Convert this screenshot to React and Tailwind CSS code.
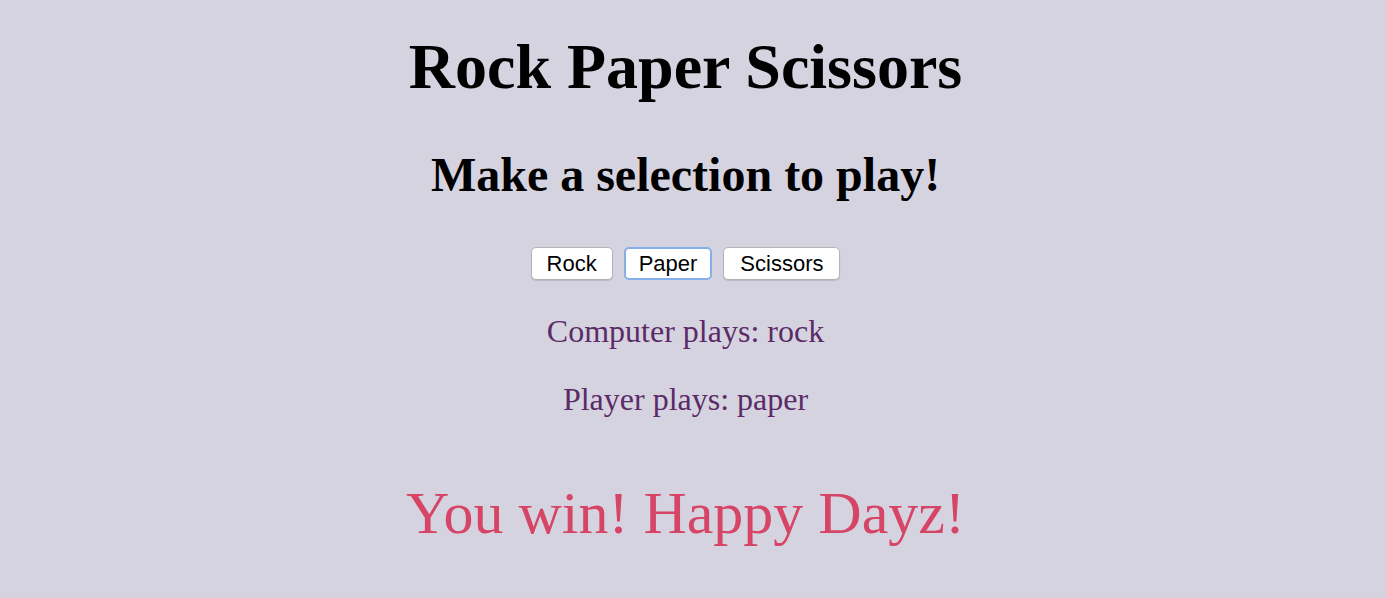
export default function App() {
  return (
    <div className="min-h-[598px] w-full bg-[#d6d3e0]">
      <div className="w-[1371px] pt-[35px] text-center font-['Liberation_Serif',serif]">
        <h1 className="text-[64px] font-bold leading-[64px] text-black">Rock Paper Scissors</h1>
        <h2 className="mt-[52px] text-[48px] font-bold leading-[48px] text-black">Make a selection to play!</h2>
        <div className="mt-[48px] flex justify-center gap-[11px] font-['Liberation_Sans',sans-serif]">
          <button className="h-[33px] rounded-[5px] border border-[#b4b4b4] bg-white px-[15px] text-[22px] leading-none text-black shadow-[0_1px_1px_rgba(0,0,0,0.12)]">Rock</button>
          <button className="h-[33px] rounded-[5px] border-2 border-[#86aee8] bg-white px-[13px] text-[22px] leading-none text-black">Paper</button>
          <button className="h-[33px] rounded-[5px] border border-[#b4b4b4] bg-white px-[16px] text-[22px] leading-none text-black shadow-[0_1px_1px_rgba(0,0,0,0.12)]">Scissors</button>
        </div>
        <p className="mt-[35px] text-[32px] leading-[32px] text-[#5b2b67]">Computer plays: rock</p>
        <p className="mt-[36px] text-[32px] leading-[32px] text-[#5b2b67]">Player plays: paper</p>
        <p className="mt-[68px] text-[60px] leading-[60px] text-[#d64566]">You win! Happy Dayz!</p>
      </div>
    </div>
  );
}
